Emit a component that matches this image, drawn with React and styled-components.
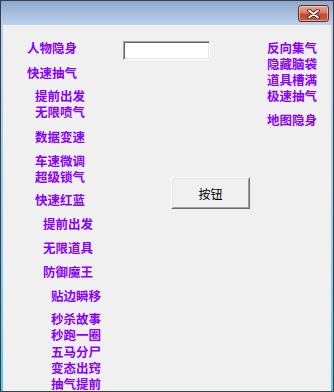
import React from "react";
import styled, { createGlobalStyle } from "styled-components";

const GlobalStyle = createGlobalStyle`
  html, body {
    margin: 0;
    padding: 0;
    background: #f0f0f0;
  }
  * {
    box-sizing: border-box;
  }
`;

const Frame = styled.div`
  width: 334px;
  height: 392px;
  border: 1px solid #34404c;
  display: flex;
  flex-direction: column;
  background: #9fc9ea;
  overflow: hidden;
`;

const TitleBar = styled.div`
  height: 24px;
  flex-shrink: 0;
  background: linear-gradient(to bottom, #8ea9cc 0%, #a8c0df 55%, #bdd2ed 100%);
  display: flex;
  justify-content: flex-end;
  align-items: flex-start;
  padding: 4px 4px 0 0;
`;

const CloseButton = styled.button`
  width: 31px;
  height: 17px;
  padding: 0;
  border: 1px solid #6a2a22;
  border-radius: 3px;
  background: linear-gradient(to bottom, #e9a99a 0%, #d77a66 45%, #c24a33 55%, #c95a40 100%);
  box-shadow: inset 0 0 0 1px rgba(255, 220, 210, 0.55);
  display: flex;
  align-items: center;
  justify-content: center;
`;

const ClientWrap = styled.div`
  flex: 1;
  display: flex;
  padding: 0 2px 2px 2px;
  background: linear-gradient(to bottom, #bdd2ed 0%, #8fcbee 60%, #5cc4ec 100%);
`;

const Client = styled.div`
  flex: 1;
  background: #f0f0f0;
  display: grid;
  grid-template-columns: 120px 144px 1fr;
  align-items: start;
  overflow: hidden;
`;

const Column = styled.div`
  display: flex;
  flex-direction: column;
  align-items: flex-start;
  padding-top: ${(p) => p.$top || 0}px;
`;

const Label = styled.div`
  font-family: "Noto Sans CJK SC", "Noto Sans", sans-serif;
  font-weight: 700;
  font-size: 12.5px;
  line-height: 16px;
  height: 16px;
  color: #8a00ff;
  white-space: nowrap;
  margin-left: ${(p) => p.$indent || 0}px;
  margin-top: ${(p) => p.$gap || 0}px;
`;

const TextBox = styled.input`
  width: 87px;
  height: 19px;
  margin-top: 16px;
  padding: 0 3px;
  border-top: 1px solid #a0a0a0;
  border-left: 1px solid #a0a0a0;
  border-right: 1px solid #ffffff;
  border-bottom: 1px solid #ffffff;
  box-shadow: inset 1px 1px 0 #696969, inset -1px -1px 0 #e3e3e3;
  background: #ffffff;
  outline: none;
`;

const PushButton = styled.button`
  width: 79px;
  height: 32px;
  margin-top: 117px;
  margin-left: 48px;
  padding: 0;
  background: #f0f0f0;
  border-top: 1px solid #ffffff;
  border-left: 1px solid #ffffff;
  border-right: 1px solid #696969;
  border-bottom: 1px solid #696969;
  box-shadow: inset 1px 1px 0 #e3e3e3, inset -1px -1px 0 #a0a0a0;
  font-family: "Noto Sans CJK SC", "Noto Sans", sans-serif;
  font-size: 12px;
  color: #000000;
`;

const Middle = styled.div`
  display: flex;
  flex-direction: column;
  align-items: flex-start;
`;

const leftItems = [
  { text: "人物隐身", indent: 24, gap: 14.5 },
  { text: "快速抽气", indent: 24, gap: 9.5 },
  { text: "提前出发", indent: 32, gap: 7 },
  { text: "无限喷气", indent: 32, gap: 0 },
  { text: "数据变速", indent: 32, gap: 9 },
  { text: "车速微调", indent: 32, gap: 8 },
  { text: "超级锁气", indent: 32, gap: 0 },
  { text: "快速红蓝", indent: 32, gap: 7 },
  { text: "提前出发", indent: 40, gap: 8 },
  { text: "无限道具", indent: 40, gap: 8 },
  { text: "防御魔王", indent: 40, gap: 8 },
  { text: "贴边瞬移", indent: 48, gap: 8 },
  { text: "秒杀故事", indent: 48, gap: 7 },
  { text: "秒跑一圈", indent: 48, gap: 0 },
  { text: "五马分尸", indent: 48, gap: 1 },
  { text: "变态出窍", indent: 48, gap: 0 },
  { text: "抽气提前", indent: 48, gap: 0 },
];

const rightItems = [
  { text: "反向集气", gap: 14.5 },
  { text: "隐藏脑袋", gap: 0.5 },
  { text: "道具槽满", gap: 0 },
  { text: "极速抽气", gap: 0 },
  { text: "地图隐身", gap: 7.5 },
];

function CloseIcon() {
  return (
    <svg width="13" height="10" viewBox="0 0 13 10">
      <path d="M2 1.5 L11 8.5 M11 1.5 L2 8.5" stroke="#4a1a14" strokeWidth="3.6" strokeLinecap="round" />
      <path d="M2 1.5 L11 8.5 M11 1.5 L2 8.5" stroke="#ffffff" strokeWidth="2" strokeLinecap="round" />
    </svg>
  );
}

export default function App() {
  return (
    <>
      <GlobalStyle />
      <Frame>
        <TitleBar>
          <CloseButton aria-label="close">
            <CloseIcon />
          </CloseButton>
        </TitleBar>
        <ClientWrap>
          <Client>
            <Column>
              {leftItems.map((item, i) => (
                <Label key={i} $indent={item.indent} $gap={item.gap}>
                  {item.text}
                </Label>
              ))}
            </Column>
            <Middle>
              <TextBox type="text" />
              <PushButton type="button">按钮</PushButton>
            </Middle>
            <Column>
              {rightItems.map((item, i) => (
                <Label key={i} $gap={item.gap}>
                  {item.text}
                </Label>
              ))}
            </Column>
          </Client>
        </ClientWrap>
      </Frame>
    </>
  );
}
